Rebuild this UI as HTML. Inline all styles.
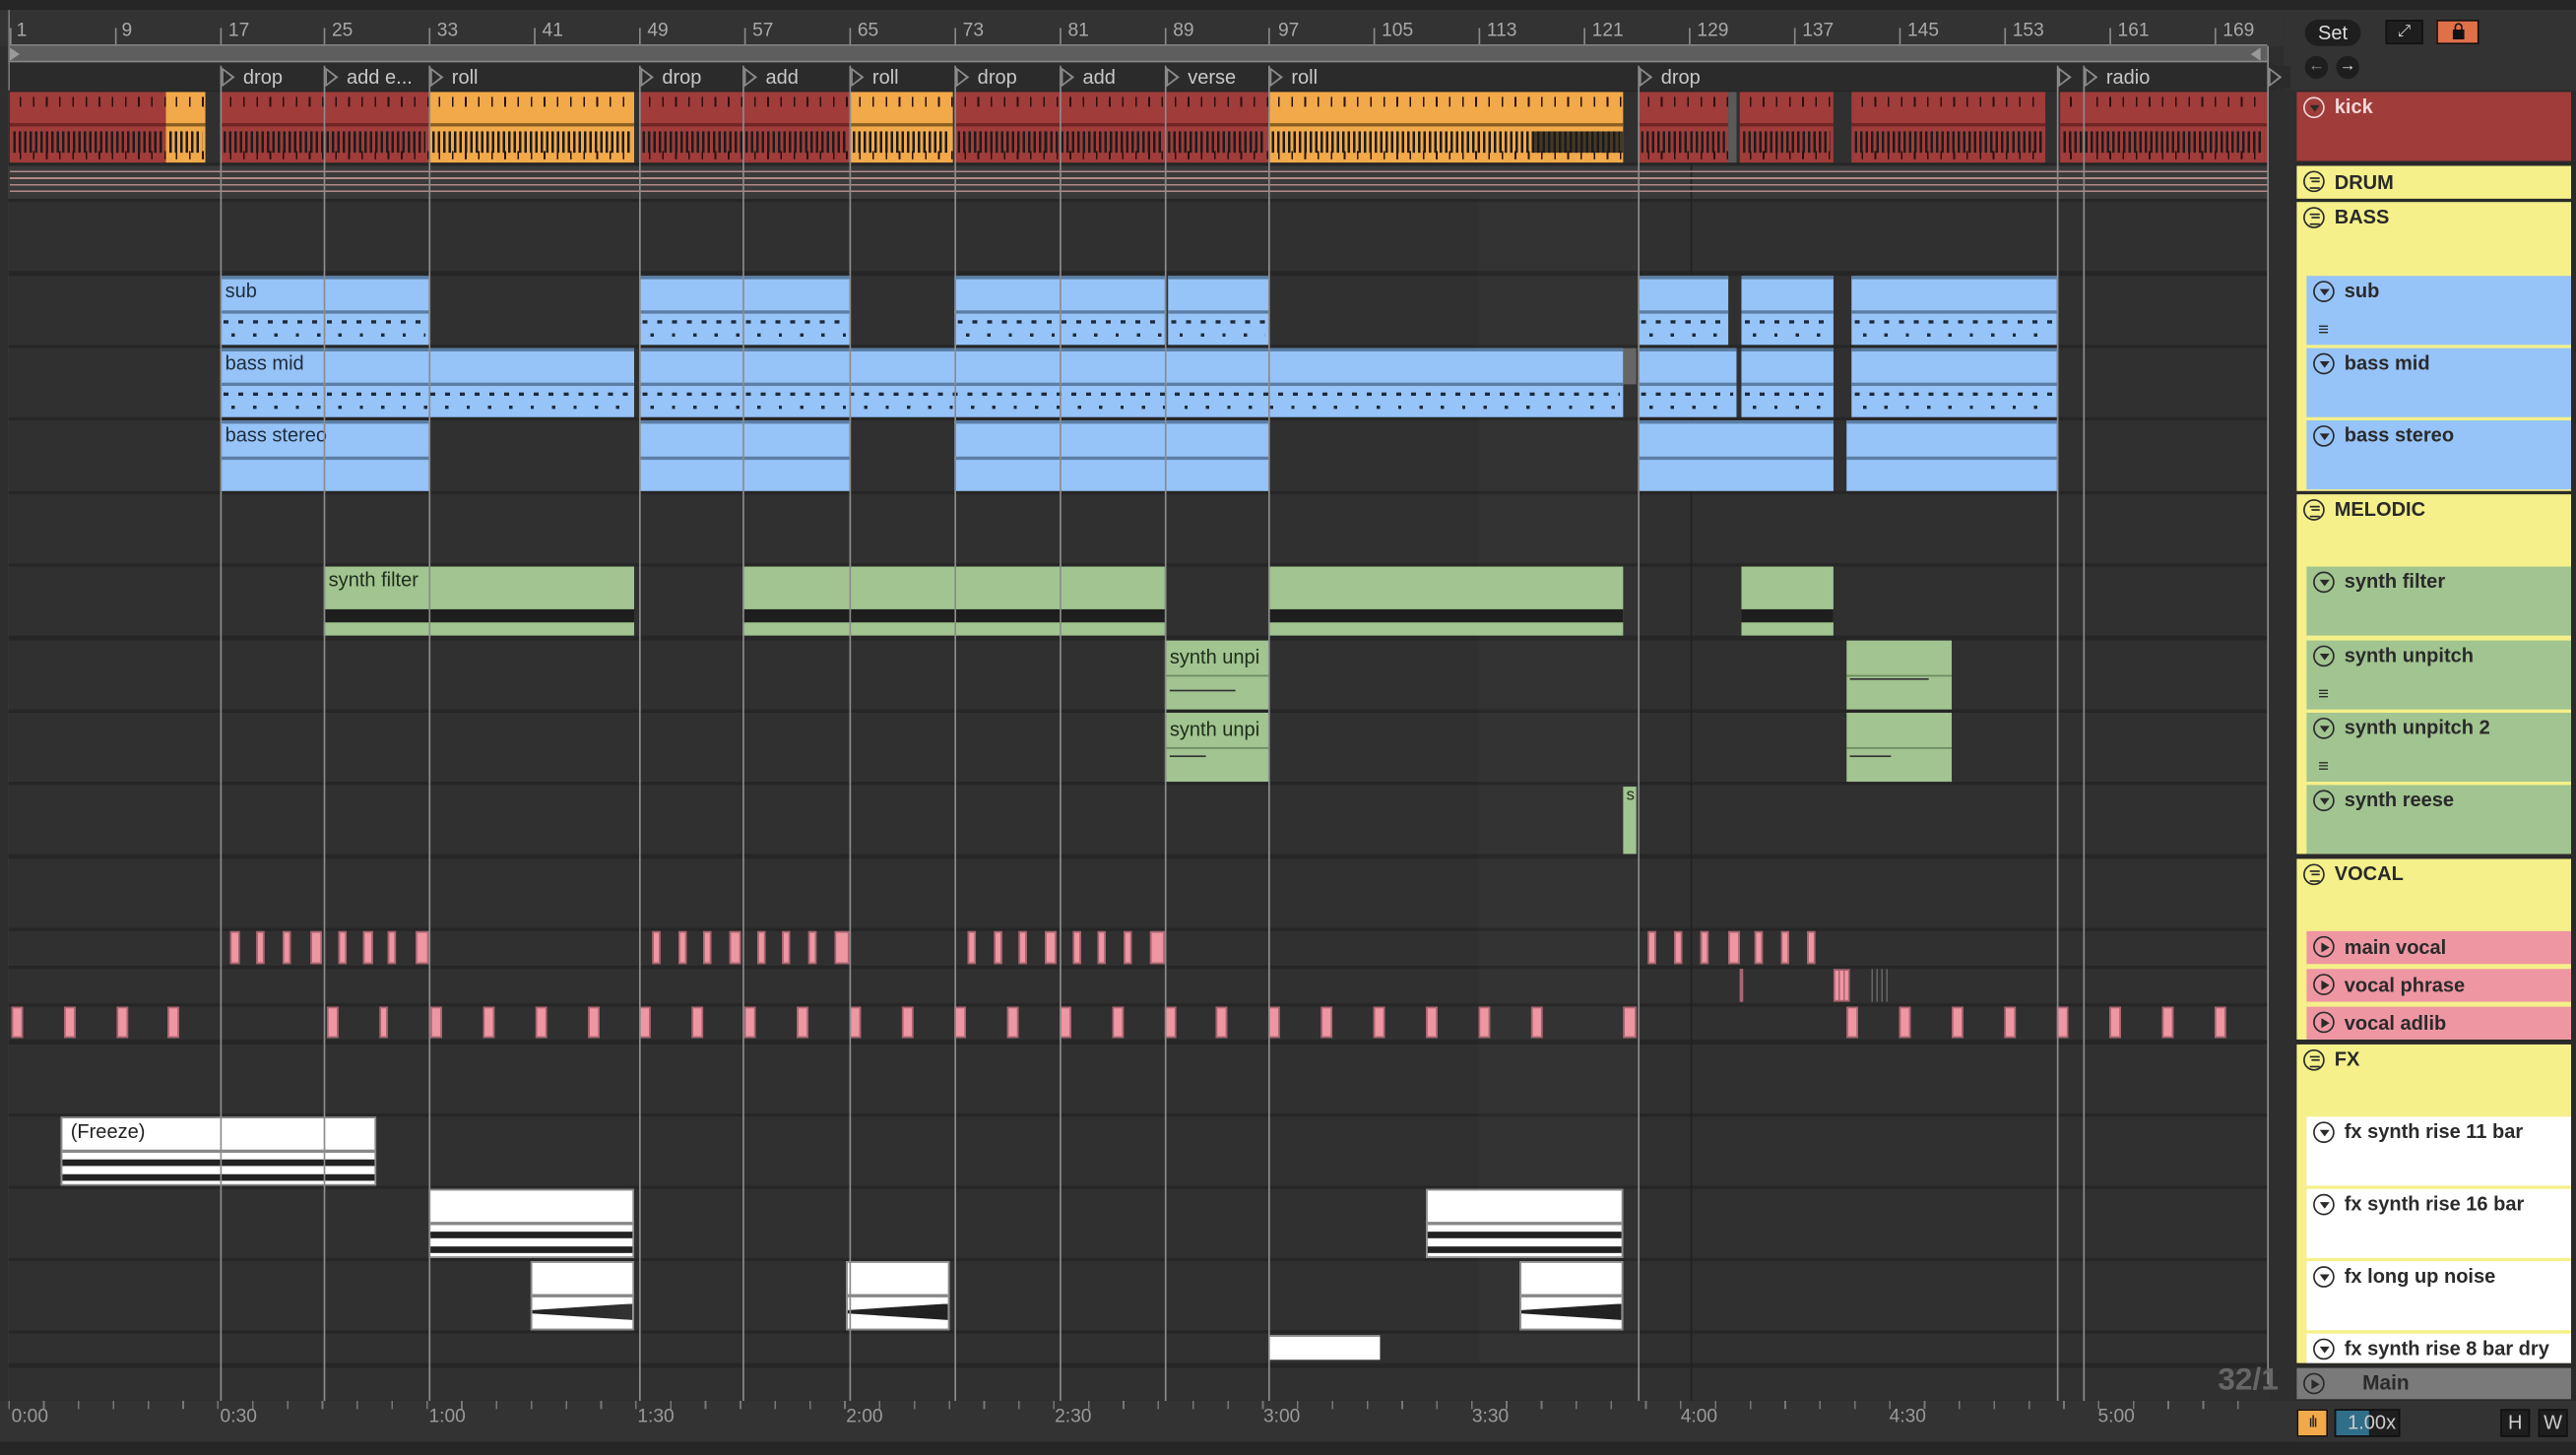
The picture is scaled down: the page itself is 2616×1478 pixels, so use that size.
<!DOCTYPE html>
<html><head><meta charset="utf-8">
<style>
*{margin:0;padding:0;box-sizing:border-box}
html,body{width:2616px;height:1478px;overflow:hidden;background:#2a2a2a}
#w{position:absolute;left:0;top:0;width:1568px;height:886px;transform:scale(1.66837,1.6682);transform-origin:0 0;font-family:"Liberation Sans",sans-serif;background:#2e2e2e}
.a{position:absolute}
.rl{position:absolute;top:13px;font-size:11.5px;color:#a8a8a8}
.tk{position:absolute;top:17px;width:1px;height:10px;background:#888}
.row{position:absolute;left:5px;width:1376px;background:#303030}
.loc{position:absolute;top:40px;height:14px;font-size:12px;color:#c8c8c8;padding-left:14px;line-height:14px;background:#2b2b2b}
.loc:before{content:"";position:absolute;left:1px;top:1px;border-left:8px solid #8a8a8a;border-top:6px solid transparent;border-bottom:6px solid transparent}
.loc:after{content:"";position:absolute;left:2px;top:3px;border-left:5px solid #2b2b2b;border-top:4px solid transparent;border-bottom:4px solid transparent}
.vl{position:absolute;top:40px;width:1px;height:815px;background:#8c8c8c}
.k{position:absolute;top:56px;height:43px;background:#a03c3a}
.k:before{content:"";position:absolute;left:0;right:0;top:19px;height:2px;background:#6e2524}
.k:after{content:"";position:absolute;left:2px;right:2px;top:24px;height:13px;background:repeating-linear-gradient(90deg,#1c1c1c 0 1.5px,transparent 1.5px 3.3px)}
.k i{position:absolute;left:0;right:0;top:3px;height:6px;background:repeating-linear-gradient(90deg,transparent 0 6px,#2a1010 6px 7px,transparent 7px 8px)}
.k b{position:absolute;left:0;right:0;bottom:2px;height:5px;background:repeating-linear-gradient(90deg,transparent 0 6px,#2a1010 6px 7px,transparent 7px 8px)}
.o{background:#f1a94a}
.o:before{background:#8a6020}
.bl{position:absolute;background:#96c3f8;border-top:2px solid #5b7ea5;font-size:12px;color:#1f2c3c;padding-left:3px;line-height:15px}
.bl:after{content:"";position:absolute;left:0;right:0;top:48%;height:2px;background:#5b7ea5}
.bl i{position:absolute;left:2px;right:2px;top:58%;height:36%;background:repeating-linear-gradient(90deg,#1c2a3a 0 3px,transparent 3px 9px),repeating-linear-gradient(90deg,transparent 0 5px,#1c2a3a 5px 7px,transparent 7px 13px);background-size:100% 2px,100% 2px;background-position:0 2px,0 10px;background-repeat:repeat-x}
.gr{position:absolute;top:345px;height:42px;background:#a1c490;font-size:12px;color:#1f2c1a;padding-left:3px;line-height:17px}
.gr:after{content:"";position:absolute;left:0;right:0;top:26px;height:8px;background:#1e1e1e}
.pk{position:absolute;background:#ee96a2;border:1px solid #a86470}
.wh{position:absolute;background:#fff;border:1px solid #888;font-size:12px;color:#222;padding-left:5px;line-height:16px}
.wh:after{content:"";position:absolute;left:0;right:0;top:48%;height:2px;background:#888}
.wh i{position:absolute;left:0;right:0;top:62%;height:4px;background:#222}
.wh b{position:absolute;left:0;right:0;top:84%;height:4px;background:#222}
.h{position:absolute;left:1398px;width:167px;font-size:12px;font-weight:bold;color:#2a2a2a;padding-left:23px;line-height:18px}
.h.c{left:1404px;width:161px}
.ic{position:absolute;left:4px;top:3px;width:13px;height:13px;border:1.3px solid #2a2a2a;border-radius:50%}
.ic.t:after{content:"";position:absolute;left:2.5px;top:3.5px;border-top:4.5px solid #2a2a2a;border-left:3.5px solid transparent;border-right:3.5px solid transparent}
.ic.p:after{content:"";position:absolute;left:4px;top:2.5px;border-left:5px solid #2a2a2a;border-top:3.5px solid transparent;border-bottom:3.5px solid transparent}
.ic.g:after{content:"";position:absolute;left:2.5px;top:3px;width:6px;height:5px;border-top:1.2px solid #2a2a2a;border-bottom:1.2px solid #2a2a2a}
.ic.g:before{content:"";position:absolute;left:3.5px;top:5.3px;width:5px;height:1.2px;background:#2a2a2a}
.tl{position:absolute;top:857px;font-size:11.5px;color:#9a9a9a}
.yl{background:#f5f08a}
</style></head><body><div id="w">
<!-- top -->
<div class="a" style="left:0;top:0;width:1568px;height:6px;background:#262626"></div>
<div class="a" style="left:0;top:6px;width:1398px;height:22px;background:#333"></div>
<div class="a" style="left:1390px;top:6px;width:178px;height:49px;background:#333"></div>
<div class="a" style="left:5px;top:27px;width:1375px;height:1px;background:#888"></div>
<div class="a" style="left:5px;top:28px;width:1375px;height:10px;background:#5e5e5e;border-bottom:1px solid #8a8a8a"></div>
<div class="a" style="left:6px;top:29px;border-left:6px solid #999;border-top:4px solid transparent;border-bottom:4px solid transparent"></div>
<div class="a" style="left:1370px;top:29px;border-right:6px solid #999;border-top:4px solid transparent;border-bottom:4px solid transparent"></div>
<div class="a" style="left:5px;top:38px;width:1380px;height:17px;background:#2b2b2b"></div>
<div class="a" style="left:5px;top:6px;width:1px;height:850px;background:#777"></div>

<div class="tk" style="left:6px"></div><span class="rl" style="left:10px">1</span>
<div class="tk" style="left:70px"></div><span class="rl" style="left:74px">9</span>
<div class="tk" style="left:134px"></div><span class="rl" style="left:139px">17</span>
<div class="tk" style="left:197px"></div><span class="rl" style="left:202px">25</span>
<div class="tk" style="left:261px"></div><span class="rl" style="left:266px">33</span>
<div class="tk" style="left:325px"></div><span class="rl" style="left:330px">41</span>
<div class="tk" style="left:389px"></div><span class="rl" style="left:394px">49</span>
<div class="tk" style="left:453px"></div><span class="rl" style="left:458px">57</span>
<div class="tk" style="left:517px"></div><span class="rl" style="left:522px">65</span>
<div class="tk" style="left:581px"></div><span class="rl" style="left:586px">73</span>
<div class="tk" style="left:645px"></div><span class="rl" style="left:650px">81</span>
<div class="tk" style="left:709px"></div><span class="rl" style="left:714px">89</span>
<div class="tk" style="left:772px"></div><span class="rl" style="left:778px">97</span>
<div class="tk" style="left:836px"></div><span class="rl" style="left:841px">105</span>
<div class="tk" style="left:900px"></div><span class="rl" style="left:905px">113</span>
<div class="tk" style="left:964px"></div><span class="rl" style="left:969px">121</span>
<div class="tk" style="left:1028px"></div><span class="rl" style="left:1033px">129</span>
<div class="tk" style="left:1092px"></div><span class="rl" style="left:1097px">137</span>
<div class="tk" style="left:1156px"></div><span class="rl" style="left:1161px">145</span>
<div class="tk" style="left:1220px"></div><span class="rl" style="left:1225px">153</span>
<div class="tk" style="left:1284px"></div><span class="rl" style="left:1289px">161</span>
<div class="tk" style="left:1348px"></div><span class="rl" style="left:1353px">169</span>

<!-- rows background -->
<div class="a" style="left:5px;top:55px;width:1393px;height:800px;background:#262626"></div>
<div class="row" style="top:56px;height:43px"></div>
<div class="row" style="top:101px;height:20px;background:#3a3a3a"></div>
<div class="row" style="top:123px;height:42px"></div>
<div class="row" style="top:168px;height:42px"></div>
<div class="row" style="top:212px;height:42px"></div>
<div class="row" style="top:256px;height:43px"></div>
<div class="row" style="top:301px;height:42px"></div>
<div class="row" style="top:345px;height:42px"></div>
<div class="row" style="top:390px;height:42px"></div>
<div class="row" style="top:434px;height:42px"></div>
<div class="row" style="top:478px;height:42px"></div>
<div class="row" style="top:523px;height:42px"></div>
<div class="row" style="top:567px;height:21px"></div>
<div class="row" style="top:590px;height:21px"></div>
<div class="row" style="top:613px;height:20px"></div>
<div class="row" style="top:636px;height:42px"></div>
<div class="row" style="top:680px;height:42px"></div>
<div class="row" style="top:724px;height:42px"></div>
<div class="row" style="top:768px;height:42px"></div>
<div class="row" style="top:812px;height:18px"></div>
<div class="row" style="top:833px;height:20px"></div>
<div class="a" style="left:1381px;top:55px;width:17px;height:800px;background:#2e2e2e"></div>
<div class="a" style="left:1029px;top:55px;width:1px;height:800px;background:#222"></div>
<div class="a" style="left:900px;top:120px;width:97px;height:710px;background:rgba(255,255,255,0.015)"></div>

<!-- drum sub-row lines -->
<div class="a" style="left:6px;top:104px;width:1375px;height:14px;background:repeating-linear-gradient(180deg,#b08a88 0 1px,transparent 1px 4px)"></div>

<!-- locators -->
<div class="loc" style="left:134px">drop</div>
<div class="loc" style="left:197px">add e...</div>
<div class="loc" style="left:261px">roll</div>
<div class="loc" style="left:389px">drop</div>
<div class="loc" style="left:452px">add</div>
<div class="loc" style="left:517px">roll</div>
<div class="loc" style="left:581px">drop</div>
<div class="loc" style="left:645px">add</div>
<div class="loc" style="left:709px">verse</div>
<div class="loc" style="left:772px">roll</div>
<div class="loc" style="left:997px">drop</div>
<div class="loc" style="left:1252px"></div>
<div class="loc" style="left:1268px">radio</div>
<div class="loc" style="left:1380px"></div>

<!-- kick clips -->
<div class="k" style="left:6px;width:95px"><i></i><b></b></div>
<div class="k o" style="left:101px;width:24px"><i></i><b></b></div>
<div class="k" style="left:134px;width:127px"><i></i><b></b></div>
<div class="k o" style="left:261px;width:125px"><i></i><b></b></div>
<div class="k" style="left:389px;width:128px"><i></i><b></b></div>
<div class="k o" style="left:517px;width:63px"><i></i><b></b></div>
<div class="k" style="left:581px;width:128px"><i></i><b></b></div>
<div class="k" style="left:709px;width:63px"><i></i><b></b></div>
<div class="k o" style="left:772px;width:216px"><i></i><b></b></div>
<div class="a" style="left:933px;top:80px;width:55px;height:13px;background:#1c1c1c;opacity:.8"></div>
<div class="k" style="left:997px;width:55px"><i></i><b></b></div>
<div class="a" style="left:1052px;top:56px;width:5px;height:43px;background:#5a5a5a"></div>
<div class="k" style="left:1059px;width:57px"><i></i><b></b></div>
<div class="k" style="left:1127px;width:118px"><i></i><b></b></div>
<div class="k" style="left:1254px;width:126px"><i></i><b></b></div>

<!-- bass -->
<div class="bl" style="left:134px;top:168px;width:127px;height:42px">sub<i></i></div>
<div class="bl" style="left:389px;top:168px;width:128px;height:42px"><i></i></div>
<div class="bl" style="left:581px;top:168px;width:128px;height:42px"><i></i></div>
<div class="bl" style="left:711px;top:168px;width:61px;height:42px"><i></i></div>
<div class="bl" style="left:997px;top:168px;width:55px;height:42px"><i></i></div>
<div class="bl" style="left:1060px;top:168px;width:56px;height:42px"><i></i></div>
<div class="bl" style="left:1127px;top:168px;width:125px;height:42px"><i></i></div>

<div class="bl" style="left:134px;top:212px;width:252px;height:42px">bass mid<i></i></div>
<div class="bl" style="left:389px;top:212px;width:599px;height:42px"><i></i></div>
<div class="a" style="left:988px;top:212px;width:8px;height:22px;background:#666"></div>
<div class="bl" style="left:997px;top:212px;width:60px;height:42px"><i></i></div>
<div class="bl" style="left:1060px;top:212px;width:56px;height:42px"><i></i></div>
<div class="bl" style="left:1127px;top:212px;width:125px;height:42px"><i></i></div>

<div class="bl" style="left:134px;top:256px;width:127px;height:43px">bass stereo</div>
<div class="bl" style="left:389px;top:256px;width:128px;height:43px"></div>
<div class="bl" style="left:581px;top:256px;width:191px;height:43px"></div>
<div class="bl" style="left:997px;top:256px;width:119px;height:43px"></div>
<div class="bl" style="left:1124px;top:256px;width:128px;height:43px"></div>

<!-- melodic -->
<div class="gr" style="left:197px;width:189px">synth filter</div>
<div class="gr" style="left:452px;width:257px"></div>
<div class="gr" style="left:772px;width:216px"></div>
<div class="gr" style="left:1060px;width:56px"></div>
<div class="a" style="left:709px;top:390px;width:63px;height:42px;background:#a1c490;font-size:12px;color:#1f2c1a;padding-left:3px;line-height:20px;overflow:hidden;white-space:nowrap">synth unpi<div class="a" style="left:0;right:0;top:21px;height:1px;background:#6b8a5e"></div><div class="a" style="left:3px;top:30px;width:40px;height:1px;background:#333"></div></div>
<div class="a" style="left:709px;top:434px;width:63px;height:42px;background:#a1c490;font-size:12px;color:#1f2c1a;padding-left:3px;line-height:20px;overflow:hidden;white-space:nowrap">synth unpi<div class="a" style="left:0;right:0;top:21px;height:1px;background:#6b8a5e"></div><div class="a" style="left:3px;top:26px;width:22px;height:1px;background:#333"></div></div>
<div class="a" style="left:1124px;top:390px;width:64px;height:42px;background:#a1c490"><div class="a" style="left:0;right:0;top:21px;height:1px;background:#6b8a5e"></div><div class="a" style="left:2px;top:23px;width:48px;height:1px;background:#333"></div></div>
<div class="a" style="left:1124px;top:434px;width:64px;height:42px;background:#a1c490"><div class="a" style="left:0;right:0;top:21px;height:1px;background:#6b8a5e"></div><div class="a" style="left:2px;top:26px;width:25px;height:1px;background:#333"></div></div>
<div class="a" style="left:988px;top:479px;width:8px;height:41px;background:#a1c490;font-size:10px;color:#1f2c1a;padding-left:2px">s</div>

<!-- main vocal -->
<div class="pk" style="left:140px;top:567px;width:6px;height:20px"></div>
<div class="pk" style="left:156px;top:567px;width:5px;height:20px"></div>
<div class="pk" style="left:172px;top:567px;width:5px;height:20px"></div>
<div class="pk" style="left:189px;top:567px;width:7px;height:20px"></div>
<div class="pk" style="left:206px;top:567px;width:5px;height:20px"></div>
<div class="pk" style="left:221px;top:567px;width:6px;height:20px"></div>
<div class="pk" style="left:236px;top:567px;width:5px;height:20px"></div>
<div class="pk" style="left:253px;top:567px;width:8px;height:20px"></div>
<div class="pk" style="left:397px;top:567px;width:5px;height:20px"></div>
<div class="pk" style="left:413px;top:567px;width:5px;height:20px"></div>
<div class="pk" style="left:428px;top:567px;width:5px;height:20px"></div>
<div class="pk" style="left:444px;top:567px;width:7px;height:20px"></div>
<div class="pk" style="left:461px;top:567px;width:5px;height:20px"></div>
<div class="pk" style="left:476px;top:567px;width:5px;height:20px"></div>
<div class="pk" style="left:492px;top:567px;width:5px;height:20px"></div>
<div class="pk" style="left:508px;top:567px;width:9px;height:20px"></div>
<div class="pk" style="left:589px;top:567px;width:5px;height:20px"></div>
<div class="pk" style="left:605px;top:567px;width:5px;height:20px"></div>
<div class="pk" style="left:620px;top:567px;width:5px;height:20px"></div>
<div class="pk" style="left:636px;top:567px;width:7px;height:20px"></div>
<div class="pk" style="left:653px;top:567px;width:5px;height:20px"></div>
<div class="pk" style="left:668px;top:567px;width:5px;height:20px"></div>
<div class="pk" style="left:684px;top:567px;width:5px;height:20px"></div>
<div class="pk" style="left:700px;top:567px;width:9px;height:20px"></div>
<div class="pk" style="left:1003px;top:567px;width:5px;height:20px"></div>
<div class="pk" style="left:1019px;top:567px;width:5px;height:20px"></div>
<div class="pk" style="left:1035px;top:567px;width:5px;height:20px"></div>
<div class="pk" style="left:1052px;top:567px;width:7px;height:20px"></div>
<div class="pk" style="left:1068px;top:567px;width:5px;height:20px"></div>
<div class="pk" style="left:1084px;top:567px;width:5px;height:20px"></div>
<div class="pk" style="left:1100px;top:567px;width:5px;height:20px"></div>
<!-- vocal phrase -->
<div class="pk" style="left:1059px;top:590px;width:2px;height:20px"></div>
<div class="pk" style="left:1116px;top:590px;width:10px;height:20px;background:repeating-linear-gradient(90deg,#ee96a2 0 2px,#a86470 2px 3px)"></div>
<div class="a" style="left:1139px;top:590px;width:11px;height:20px;background:repeating-linear-gradient(90deg,#666 0 1px,transparent 1px 3px)"></div>
<!-- vocal adlib -->
<div class="pk" style="left:7px;top:613px;width:7px;height:19px"></div>
<div class="pk" style="left:39px;top:613px;width:7px;height:19px"></div>
<div class="pk" style="left:71px;top:613px;width:7px;height:19px"></div>
<div class="pk" style="left:102px;top:613px;width:7px;height:19px"></div>
<div class="pk" style="left:199px;top:613px;width:7px;height:19px"></div>
<div class="pk" style="left:231px;top:613px;width:5px;height:19px"></div>
<div class="pk" style="left:262px;top:613px;width:7px;height:19px"></div>
<div class="pk" style="left:294px;top:613px;width:7px;height:19px"></div>
<div class="pk" style="left:326px;top:613px;width:7px;height:19px"></div>
<div class="pk" style="left:358px;top:613px;width:7px;height:19px"></div>
<div class="pk" style="left:389px;top:613px;width:7px;height:19px"></div>
<div class="pk" style="left:421px;top:613px;width:7px;height:19px"></div>
<div class="pk" style="left:453px;top:613px;width:7px;height:19px"></div>
<div class="pk" style="left:485px;top:613px;width:7px;height:19px"></div>
<div class="pk" style="left:517px;top:613px;width:7px;height:19px"></div>
<div class="pk" style="left:549px;top:613px;width:7px;height:19px"></div>
<div class="pk" style="left:581px;top:613px;width:7px;height:19px"></div>
<div class="pk" style="left:613px;top:613px;width:7px;height:19px"></div>
<div class="pk" style="left:645px;top:613px;width:7px;height:19px"></div>
<div class="pk" style="left:677px;top:613px;width:7px;height:19px"></div>
<div class="pk" style="left:709px;top:613px;width:7px;height:19px"></div>
<div class="pk" style="left:740px;top:613px;width:7px;height:19px"></div>
<div class="pk" style="left:772px;top:613px;width:7px;height:19px"></div>
<div class="pk" style="left:804px;top:613px;width:7px;height:19px"></div>
<div class="pk" style="left:836px;top:613px;width:7px;height:19px"></div>
<div class="pk" style="left:868px;top:613px;width:7px;height:19px"></div>
<div class="pk" style="left:900px;top:613px;width:7px;height:19px"></div>
<div class="pk" style="left:932px;top:613px;width:7px;height:19px"></div>
<div class="pk" style="left:988px;top:613px;width:8px;height:19px"></div>
<div class="pk" style="left:1124px;top:613px;width:7px;height:19px"></div>
<div class="pk" style="left:1156px;top:613px;width:7px;height:19px"></div>
<div class="pk" style="left:1188px;top:613px;width:7px;height:19px"></div>
<div class="pk" style="left:1220px;top:613px;width:7px;height:19px"></div>
<div class="pk" style="left:1252px;top:613px;width:7px;height:19px"></div>
<div class="pk" style="left:1284px;top:613px;width:7px;height:19px"></div>
<div class="pk" style="left:1316px;top:613px;width:7px;height:19px"></div>
<div class="pk" style="left:1348px;top:613px;width:7px;height:19px"></div>

<!-- fx clips -->
<div class="wh" style="left:37px;top:680px;width:192px;height:42px">(Freeze)<i></i><b></b></div>
<div class="wh" style="left:261px;top:724px;width:125px;height:42px"><i></i><b></b></div>
<div class="wh" style="left:868px;top:724px;width:120px;height:42px"><i></i><b></b></div>
<div class="wh" style="left:323px;top:768px;width:63px;height:42px"><i style="height:10px;top:62%;background:linear-gradient(90deg,#222,#333);clip-path:polygon(0 40%,100% 0,100% 100%,0 60%)"></i></div>
<div class="wh" style="left:515px;top:768px;width:63px;height:42px"><i style="height:10px;top:62%;clip-path:polygon(0 40%,100% 0,100% 100%,0 60%)"></i></div>
<div class="wh" style="left:925px;top:768px;width:63px;height:42px"><i style="height:10px;top:62%;clip-path:polygon(0 40%,100% 0,100% 100%,0 60%)"></i></div>
<div class="a" style="left:772px;top:813px;width:68px;height:15px;background:#fff;border-top:1px solid #888"></div>

<!-- locator lines -->
<div class="vl" style="left:134px"></div>
<div class="vl" style="left:197px"></div>
<div class="vl" style="left:261px"></div>
<div class="vl" style="left:389px"></div>
<div class="vl" style="left:452px"></div>
<div class="vl" style="left:517px"></div>
<div class="vl" style="left:581px"></div>
<div class="vl" style="left:645px"></div>
<div class="vl" style="left:709px"></div>
<div class="vl" style="left:772px"></div>
<div class="vl" style="left:997px"></div>
<div class="vl" style="left:1252px"></div>
<div class="vl" style="left:1268px"></div>
<div class="vl" style="left:1380px;top:28px"></div>

<!-- bottom ruler -->
<div class="a" style="left:0;top:853px;width:1398px;height:25px;background:#333"></div>
<div class="a" style="left:5px;top:853px;width:1375px;height:5px;background:repeating-linear-gradient(90deg,#777 0 1px,transparent 1px 21.2px)"></div>
<span class="tl" style="left:7px">0:00</span>
<span class="tl" style="left:134px">0:30</span>
<span class="tl" style="left:261px">1:00</span>
<span class="tl" style="left:388px">1:30</span>
<span class="tl" style="left:515px">2:00</span>
<span class="tl" style="left:642px">2:30</span>
<span class="tl" style="left:769px">3:00</span>
<span class="tl" style="left:896px">3:30</span>
<span class="tl" style="left:1023px">4:00</span>
<span class="tl" style="left:1150px">4:30</span>
<span class="tl" style="left:1277px">5:00</span>
<div class="a" style="left:0;top:878px;width:1568px;height:8px;background:#262626"></div>
<div class="a" style="left:1398px;top:853px;width:170px;height:25px;background:#333"></div>
<div class="a" style="left:1350px;top:830px;font-size:19px;font-weight:bold;color:#666">32/1</div>

<!-- right header panel -->
<div class="a" style="left:1398px;top:55px;width:170px;height:798px;background:#2a2a2a"></div>
<div class="h" style="top:56px;height:42px;background:#a03c3a;color:#f0d8d8"><span class="ic t" style="border-color:#f0d8d8"></span>kick</div>
<div class="h yl" style="top:101px;height:20px;line-height:20px"><span class="ic g"></span>DRUM</div>
<div class="h yl" style="top:123px;height:176px"><span class="ic g"></span>BASS</div>
<div class="h c" style="top:168px;height:42px;background:#96c3f8"><span class="ic t"></span>sub<div class="a" style="left:7px;top:24px;font-size:11px">≡</div></div>
<div class="h c" style="top:212px;height:42px;background:#96c3f8"><span class="ic t"></span>bass mid</div>
<div class="h c" style="top:256px;height:42px;background:#96c3f8"><span class="ic t"></span>bass stereo</div>
<div class="h yl" style="top:301px;height:219px"><span class="ic g"></span>MELODIC</div>
<div class="h c" style="top:345px;height:42px;background:#a1c490"><span class="ic t"></span>synth filter</div>
<div class="h c" style="top:390px;height:42px;background:#a1c490"><span class="ic t"></span>synth unpitch<div class="a" style="left:7px;top:24px;font-size:11px">≡</div></div>
<div class="h c" style="top:434px;height:42px;background:#a1c490"><span class="ic t"></span>synth unpitch 2<div class="a" style="left:7px;top:24px;font-size:11px">≡</div></div>
<div class="h c" style="top:478px;height:42px;background:#a1c490"><span class="ic t"></span>synth reese</div>
<div class="h yl" style="top:523px;height:110px"><span class="ic g"></span>VOCAL</div>
<div class="h c" style="top:567px;height:20px;line-height:20px;background:#ee96a2"><span class="ic p"></span>main vocal</div>
<div class="h c" style="top:590px;height:20px;line-height:20px;background:#ee96a2"><span class="ic p"></span>vocal phrase</div>
<div class="h c" style="top:613px;height:20px;line-height:20px;background:#ee96a2"><span class="ic p"></span>vocal adlib</div>
<div class="h yl" style="top:636px;height:194px"><span class="ic g"></span>FX</div>
<div class="h c" style="top:680px;height:42px;background:#fff"><span class="ic t"></span>fx synth rise 11 bar</div>
<div class="h c" style="top:724px;height:42px;background:#fff"><span class="ic t"></span>fx synth rise 16 bar</div>
<div class="h c" style="top:768px;height:42px;background:#fff"><span class="ic t"></span>fx long up noise</div>
<div class="h c" style="top:812px;height:18px;background:#fff;overflow:hidden"><span class="ic t"></span>fx synth rise 8 bar dry</div>
<div class="h" style="top:833px;height:19px;line-height:19px;background:#7a7a7a;padding-left:40px;font-size:12.5px"><span class="ic p"></span>Main</div>

<!-- top right controls -->
<div class="a" style="left:1403px;top:12px;width:34px;height:16px;border-radius:8px;background:#1e1e1e;color:#ddd;font-size:12px;text-align:center;line-height:16px">Set</div>
<div class="a" style="left:1452px;top:12px;width:23px;height:15px;background:#1e1e1e;border:1px solid #111;color:#ddd;font-size:10px;text-align:center;line-height:13px">⤢</div>
<div class="a" style="left:1483px;top:12px;width:26px;height:15px;background:#e07048;border:1px solid #111"><div class="a" style="left:9px;top:5px;width:7px;height:6px;background:#111"></div><div class="a" style="left:10px;top:1px;width:5px;height:6px;border:1.3px solid #111;border-bottom:none;border-radius:3px 3px 0 0"></div></div>
<div class="a" style="left:1403px;top:34px;width:14px;height:14px;border-radius:50%;background:#1e1e1e;color:#888;font-size:10px;text-align:center;line-height:14px">←</div>
<div class="a" style="left:1422px;top:34px;width:14px;height:14px;border-radius:50%;background:#1e1e1e;color:#ddd;font-size:10px;text-align:center;line-height:14px">→</div>

<!-- bottom right controls -->
<div class="a" style="left:1398px;top:858px;width:19px;height:17px;background:#f1a94a;border:1px solid #111;color:#222;font-size:10px;text-align:center;line-height:15px;letter-spacing:-1px">ılı</div>
<div class="a" style="left:1421px;top:858px;width:40px;height:17px;background:#1e1e1e;border:1px solid #111;color:#ccc;font-size:12px;line-height:15px;padding-left:7px"><div class="a" style="left:0;top:0;width:20px;height:15px;background:#2f6f8a"></div><span style="position:relative">1.00x</span></div>
<div class="a" style="left:1522px;top:858px;width:18px;height:17px;background:#1e1e1e;border:1px solid #111;color:#ccc;font-size:12px;text-align:center;line-height:15px">H</div>
<div class="a" style="left:1545px;top:858px;width:18px;height:17px;background:#1e1e1e;border:1px solid #111;color:#ccc;font-size:12px;text-align:center;line-height:15px">W</div>
</div></body></html>
